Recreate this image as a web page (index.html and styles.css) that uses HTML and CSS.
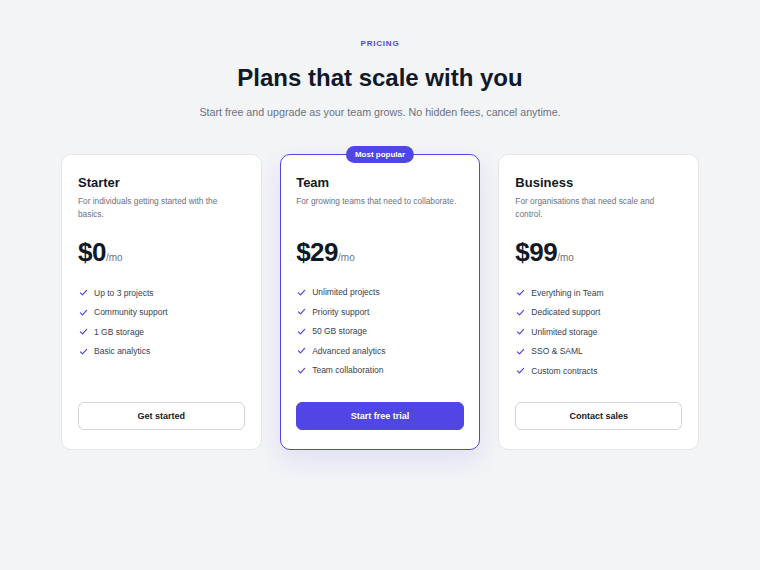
FILE: index.html
```html
<!DOCTYPE html>
<html lang="en">
<head>
<meta charset="UTF-8">
<meta name="viewport" content="width=device-width, initial-scale=1.0">
<title>Pricing</title>
<link rel="stylesheet" href="styles.css">
</head>
<body>

<section class="pricing">
  <div class="pricing-header">
    <p class="eyebrow">PRICING</p>
    <h1>Plans that scale with you</h1>
    <p class="lead">Start free and upgrade as your team grows. No hidden fees, cancel anytime.</p>
  </div>

  <div class="plans">
    <!-- Starter -->
    <div class="plan">
      <h3>Starter</h3>
      <p class="plan-desc">For individuals getting started with the basics.</p>
      <div class="price"><span class="amount">$0</span><span class="per">/mo</span></div>
      <ul class="features">
        <li><svg viewBox="0 0 16 16"><path d="M3.5 8.5l3 3 6-6.5"/></svg>Up to 3 projects</li>
        <li><svg viewBox="0 0 16 16"><path d="M3.5 8.5l3 3 6-6.5"/></svg>Community support</li>
        <li><svg viewBox="0 0 16 16"><path d="M3.5 8.5l3 3 6-6.5"/></svg>1 GB storage</li>
        <li><svg viewBox="0 0 16 16"><path d="M3.5 8.5l3 3 6-6.5"/></svg>Basic analytics</li>
      </ul>
      <button class="plan-btn">Get started</button>
    </div>

    <!-- Team (highlighted) -->
    <div class="plan plan-featured">
      <span class="badge">Most popular</span>
      <h3>Team</h3>
      <p class="plan-desc">For growing teams that need to collaborate.</p>
      <div class="price"><span class="amount">$29</span><span class="per">/mo</span></div>
      <ul class="features">
        <li><svg viewBox="0 0 16 16"><path d="M3.5 8.5l3 3 6-6.5"/></svg>Unlimited projects</li>
        <li><svg viewBox="0 0 16 16"><path d="M3.5 8.5l3 3 6-6.5"/></svg>Priority support</li>
        <li><svg viewBox="0 0 16 16"><path d="M3.5 8.5l3 3 6-6.5"/></svg>50 GB storage</li>
        <li><svg viewBox="0 0 16 16"><path d="M3.5 8.5l3 3 6-6.5"/></svg>Advanced analytics</li>
        <li><svg viewBox="0 0 16 16"><path d="M3.5 8.5l3 3 6-6.5"/></svg>Team collaboration</li>
      </ul>
      <button class="plan-btn primary">Start free trial</button>
    </div>

    <!-- Business -->
    <div class="plan">
      <h3>Business</h3>
      <p class="plan-desc">For organisations that need scale and control.</p>
      <div class="price"><span class="amount">$99</span><span class="per">/mo</span></div>
      <ul class="features">
        <li><svg viewBox="0 0 16 16"><path d="M3.5 8.5l3 3 6-6.5"/></svg>Everything in Team</li>
        <li><svg viewBox="0 0 16 16"><path d="M3.5 8.5l3 3 6-6.5"/></svg>Dedicated support</li>
        <li><svg viewBox="0 0 16 16"><path d="M3.5 8.5l3 3 6-6.5"/></svg>Unlimited storage</li>
        <li><svg viewBox="0 0 16 16"><path d="M3.5 8.5l3 3 6-6.5"/></svg>SSO &amp; SAML</li>
        <li><svg viewBox="0 0 16 16"><path d="M3.5 8.5l3 3 6-6.5"/></svg>Custom contracts</li>
      </ul>
      <button class="plan-btn">Contact sales</button>
    </div>
  </div>
</section>

</body>
</html>
```

FILE: styles.css
```css
body {
  font-family: 'Liberation Sans', Arial, Helvetica, sans-serif;
  background-color: #f3f4f6;
  color: #111827;
  margin: 0;
  padding: 38px 0 40px;
}
.pricing {
  max-width: 638px;
  margin: 0 auto;
}
.pricing-header {
  text-align: center;
}
.eyebrow {
  margin: 0;
  font-size: 8px;
  line-height: 11px;
  font-weight: bold;
  letter-spacing: 0.8px;
  color: #4f46e5;
}
.pricing-header h1 {
  margin: 14px 0 0;
  font-size: 24px;
  line-height: 30px;
  font-weight: bold;
  color: #111827;
}
.lead {
  margin: 12px 0 0;
  font-size: 10.7px;
  line-height: 14px;
  color: #6b7280;
}
.plans {
  display: grid;
  grid-template-columns: repeat(3, 1fr);
  gap: 18px;
  margin-top: 35px;
}
.plan {
  position: relative;
  display: flex;
  flex-direction: column;
  background-color: #fff;
  border: 1px solid #e5e7eb;
  border-radius: 10px;
  padding: 20px 16px 19px;
}
.plan-featured {
  border: 1.5px solid #4f46e5;
  padding: 19.5px 15.5px 18.5px;
  box-shadow: 0 10px 24px rgba(79, 70, 229, 0.12);
}
.badge {
  position: absolute;
  top: -9px;
  left: 50%;
  transform: translateX(-50%);
  background-color: #4f46e5;
  color: #fff;
  font-size: 8px;
  font-weight: bold;
  line-height: 17px;
  padding: 0 9px;
  border-radius: 9px;
  white-space: nowrap;
}
.plan h3 {
  margin: 0;
  font-size: 13px;
  line-height: 16px;
  font-weight: bold;
  color: #111827;
}
.plan-desc {
  margin: 4px 0 0;
  min-height: 26px;
  font-size: 8.3px;
  line-height: 13px;
  color: #6b7280;
}
.price {
  margin-top: 18px;
  display: flex;
  align-items: baseline;
}
.amount {
  font-size: 26px;
  line-height: 26px;
  font-weight: bold;
  letter-spacing: -0.5px;
  color: #111827;
}
.per {
  font-size: 10px;
  color: #6b7280;
}
.features {
  list-style: none;
  margin: 18px 0 21px;
  padding: 0;
}
.features li {
  display: flex;
  align-items: center;
  gap: 5px;
  height: 19.5px;
  font-size: 8.5px;
  color: #374151;
}
.features svg {
  width: 11px;
  height: 11px;
  fill: none;
  stroke: #4f46e5;
  stroke-width: 1.8;
  stroke-linecap: round;
  stroke-linejoin: round;
  flex-shrink: 0;
}
.plan-btn {
  margin-top: auto;
  height: 28px;
  width: 100%;
  border: 1px solid #d1d5db;
  background-color: #fff;
  border-radius: 6px;
  font-family: inherit;
  font-size: 9px;
  font-weight: bold;
  color: #111827;
  cursor: pointer;
}
.plan-btn.primary {
  background-color: #4f46e5;
  border-color: #4f46e5;
  color: #fff;
}
```
